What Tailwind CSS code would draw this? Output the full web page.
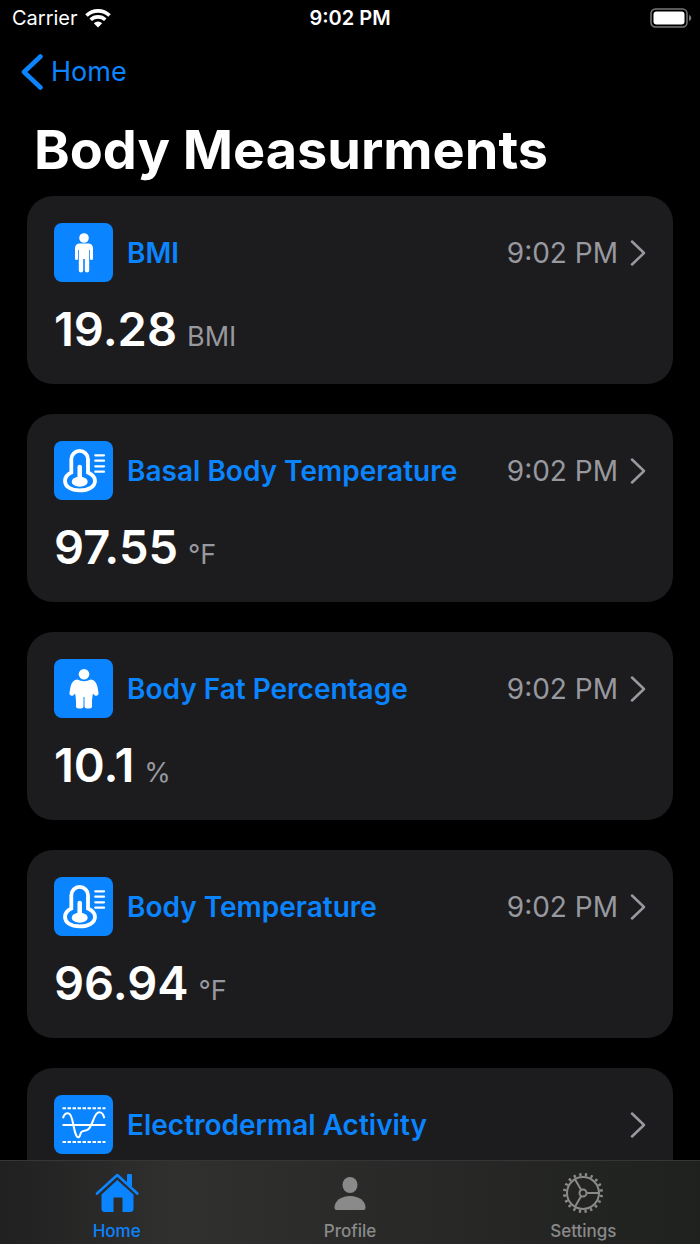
<!DOCTYPE html>
<html lang="en">
  <head>
    <meta charset="UTF-8" />
    <meta name="viewport" content="width=device-width, initial-scale=1.0" />
    <script src="https://cdn.jsdelivr.net/npm/@tailwindcss/browser@4"></script>
    <title>Body Measurments</title>
  </head>

  <body class="bg-black font-['Inter','Liberation_Sans',sans-serif] text-white">
    <!-- shared icons -->
    <svg class="hidden">
      <symbol id="thermometer" viewBox="0 0 59 59">
        <path
          d="M17.300 18.300a8.350 8.350 0 0 1 16.700 0V31.500c4.500 2 7 5 7 8.500 0 5.500-6.500 9.400-15.300 9.400S11 45.500 11 40c0-3.500 2-6.500 6.300-8.500z"
          fill="none"
          stroke="#fff"
          stroke-width="3.800"
        />
        <path d="M25.700 26v14" stroke="#fff" stroke-width="4.500" stroke-linecap="round" />
        <ellipse cx="25.700" cy="40.800" rx="8" ry="5" fill="#fff" />
        <path d="M41.300 14.300h8.700M41.300 19.700h8.700M41.300 25.300h8.700M41.300 30.700h8.700" stroke="#fff" stroke-width="2.300" stroke-linecap="round" />
      </symbol>
      <symbol id="chevron" viewBox="0 0 16 26">
        <path d="M2 1.500 14 13 2 24.500" fill="none" stroke="currentColor" stroke-width="2.500" stroke-linecap="round" stroke-linejoin="round" />
      </symbol>
    </svg>

    <div class="flex h-screen flex-col">
      <!-- status bar -->
      <div class="grid h-9 grid-cols-3 items-center px-2 text-xl leading-6">
        <div class="flex items-center gap-1.5 pl-1">
          <span>Carrier</span>
          <svg class="h-5 w-7" viewBox="0 0 28 20" aria-hidden="true">
            <g fill="none" stroke="#fff" stroke-width="3.600">
              <path d="M2.500 7.500a16.500 16.500 0 0 1 23 0" />
              <path d="M6.700 11.800a10.500 10.500 0 0 1 14.600 0" />
            </g>
            <path d="M14 19.500 9.800 15.300a6 6 0 0 1 8.400 0z" fill="#fff" />
          </svg>
        </div>
        <span class="text-center font-semibold">9:02 PM</span>
        <svg class="h-5 w-[42px] justify-self-end" viewBox="0 0 42 20" aria-hidden="true">
          <rect x="1" y="1" width="36" height="18" rx="4.500" fill="none" stroke="#77777b" stroke-width="1.500" />
          <rect x="3.500" y="3.500" width="31" height="13" rx="3" fill="#fff" />
          <path d="M39 7c3 1 3 5 0 6z" fill="#77777b" />
        </svg>
      </div>

      <header>
        <a href="#" class="flex h-[72px] w-fit items-center gap-2 pl-[21px] text-[27px] text-[#0a84ff]">
          <svg class="h-9 w-[22px]" viewBox="0 0 22 36" aria-hidden="true">
            <path d="M19.500 2.500 3 18l16.500 15.500" fill="none" stroke="currentColor" stroke-width="4.500" stroke-linecap="round" stroke-linejoin="round" />
          </svg>
          Home
        </a>
        <h1 class="pl-[34px] text-[54px] leading-[84px] font-bold">Body Measurments</h1>
      </header>

      <main class="min-h-0 flex-1 overflow-y-auto px-[27px] pt-1 [scrollbar-width:none]">
        <ul class="flex flex-col gap-[30px]">
          <li>
            <a href="#" class="block h-[188px] rounded-[26px] bg-[#1c1c1e] p-[27px]">
              <div class="flex items-center">
                <svg class="size-[59px] rounded-lg bg-[#0a84ff]" viewBox="0 0 59 59" fill="#fff" aria-hidden="true">
                  <circle cx="30" cy="15" r="4.800" />
                  <path d="M25.500 20.500h9a4.500 4.500 0 0 1 4.500 4.500v10.500a1.500 1.500 0 0 1-3 0V27h-.8v20.300a2.200 2.200 0 0 1-4.400 0V36h-1.600v11.300a2.200 2.200 0 0 1-4.400 0V27H24v8.500a1.500 1.500 0 0 1-3 0V25a4.500 4.500 0 0 1 4.500-4.500z" />
                </svg>
                <h2 class="ml-3.5 flex-1 text-[28px] font-semibold text-[#0a84ff]">BMI</h2>
                <span class="text-[28px] text-[#98989f]">9:02 PM</span>
                <svg class="ml-3 h-[26px] w-4 text-[#98989f]"><use href="#chevron" /></svg>
              </div>
              <p class="mt-[15px] flex items-baseline gap-2.5 text-[47px] leading-[64px] font-semibold">
                19.28 <span class="text-[27px] font-normal text-[#98989f]">BMI</span>
              </p>
            </a>
          </li>
          <li>
            <a href="#" class="block h-[188px] rounded-[26px] bg-[#1c1c1e] p-[27px]">
              <div class="flex items-center">
                <svg class="size-[59px] rounded-lg bg-[#0a84ff]"><use href="#thermometer" /></svg>
                <h2 class="ml-3.5 flex-1 text-[28px] font-semibold text-[#0a84ff]">Basal Body Temperature</h2>
                <span class="text-[28px] text-[#98989f]">9:02 PM</span>
                <svg class="ml-3 h-[26px] w-4 text-[#98989f]"><use href="#chevron" /></svg>
              </div>
              <p class="mt-[15px] flex items-baseline gap-2.5 text-[47px] leading-[64px] font-semibold">
                97.55 <span class="text-[27px] font-normal text-[#98989f]">°F</span>
              </p>
            </a>
          </li>
          <li>
            <a href="#" class="block h-[188px] rounded-[26px] bg-[#1c1c1e] p-[27px]">
              <div class="flex items-center">
                <svg class="size-[59px] rounded-lg bg-[#0a84ff]" viewBox="0 0 59 59" fill="#fff" aria-hidden="true">
                  <circle cx="30" cy="15.300" r="5.300" />
                  <path d="M23.500 20.500c4 2.300 9 2.300 13 0 4.500.5 6 3.500 7 7.500l1 5.500c.6 3.500-3.700 4.500-5 1.500h-.7c-.5 3.500-.8 6-.8 9v3a2.500 2.500 0 0 1-2.500 2.500h-2.500a2.500 2.500 0 0 1-2.500-2.500V38h-1v9a2.500 2.500 0 0 1-2.500 2.500h-2.500a2.500 2.500 0 0 1-2.500-2.500v-3c0-3-.3-5.500-.8-9h-.7c-1.300 3-5.600 2-5-1.500l1-5.500c1-4 2.500-7 7-7.500z" />
                </svg>
                <h2 class="ml-3.5 flex-1 text-[28px] font-semibold text-[#0a84ff]">Body Fat Percentage</h2>
                <span class="text-[28px] text-[#98989f]">9:02 PM</span>
                <svg class="ml-3 h-[26px] w-4 text-[#98989f]"><use href="#chevron" /></svg>
              </div>
              <p class="mt-[15px] flex items-baseline gap-2.5 text-[47px] leading-[64px] font-semibold">
                10.1 <span class="text-[27px] font-normal text-[#98989f]">%</span>
              </p>
            </a>
          </li>
          <li>
            <a href="#" class="block h-[188px] rounded-[26px] bg-[#1c1c1e] p-[27px]">
              <div class="flex items-center">
                <svg class="size-[59px] rounded-lg bg-[#0a84ff]"><use href="#thermometer" /></svg>
                <h2 class="ml-3.5 flex-1 text-[28px] font-semibold text-[#0a84ff]">Body Temperature</h2>
                <span class="text-[28px] text-[#98989f]">9:02 PM</span>
                <svg class="ml-3 h-[26px] w-4 text-[#98989f]"><use href="#chevron" /></svg>
              </div>
              <p class="mt-[15px] flex items-baseline gap-2.5 text-[47px] leading-[64px] font-semibold">
                96.94 <span class="text-[27px] font-normal text-[#98989f]">°F</span>
              </p>
            </a>
          </li>
          <li>
            <a href="#" class="block h-[188px] rounded-[26px] bg-[#1c1c1e] p-[27px]">
              <div class="flex items-center">
                <svg class="size-[59px] rounded-lg bg-[#0a84ff]" viewBox="0 0 59 59" fill="none" stroke="#fff" aria-hidden="true">
                  <path d="M8.500 13.300h43M8.500 47h43" stroke-width="2" stroke-dasharray="3.500 1.500" />
                  <path d="M8.500 30h43" stroke-width="1.800" />
                  <path d="M9 23.300c.7-3 2.500-5 4.700-5 2.300 0 3.600 2.700 4.600 6.700 1.700 7 3 17.300 6 17.300 2 0 1.700-4.300 3.400-5.600 2-1.400 4.600-.5 6.600-2.400 2.200-2 3.500-5.800 5-9.300 1.500-4 3.400-7.700 6-7.700 2.500 0 4.300 2.500 5 6" stroke-width="2" />
                </svg>
                <h2 class="ml-3.5 flex-1 text-[28px] font-semibold text-[#0a84ff]">Electrodermal Activity</h2>
                <svg class="ml-3 h-[26px] w-4 text-[#98989f]"><use href="#chevron" /></svg>
              </div>
            </a>
          </li>
        </ul>
      </main>

      <!-- tab bar -->
      <nav class="grid h-[84px] grid-cols-3 border-t border-[#363638] bg-linear-to-r from-[#202020] via-[#30302f] via-25% to-[#1f211f] text-[17px] leading-5 font-medium text-[#8a8a8a]">
        <a href="#" class="flex flex-col items-center gap-1 pt-3 text-[#0a84ff]">
          <svg class="size-11" viewBox="0 0 44 44" fill="currentColor" aria-hidden="true">
            <path d="M2 20.500 22.300 2l20 18.500" fill="none" stroke="currentColor" stroke-width="2.600" stroke-linecap="round" stroke-linejoin="round" />
            <path d="M32 2a1 1 0 0 1 1-1h3a1 1 0 0 1 1 1v13l-5-4.500z" />
            <path d="M22.300 7 38.500 21.500v14A3.500 3.500 0 0 1 35 39h-7.500V24.500h-9V39H10a3.500 3.500 0 0 1-3.500-3.500v-14z" />
          </svg>
          Home
        </a>
        <a href="#" class="flex flex-col items-center gap-1 pt-3">
          <svg class="size-11" viewBox="0 0 44 44" fill="currentColor" aria-hidden="true">
            <ellipse cx="22" cy="12" rx="7.500" ry="8" />
            <path d="M6.500 34.500C6.500 28 13 23 22 23s15.500 5 15.500 11.500c0 1.500-.5 2.500-2 2.500h-27c-1.500 0-2-1-2-2.500z" />
          </svg>
          Profile
        </a>
        <a href="#" class="flex flex-col items-center gap-1 pt-3">
          <svg class="size-11" viewBox="0 0 44 44" fill="none" stroke="currentColor" stroke-width="2" aria-hidden="true">
            <circle cx="22" cy="20" r="16" />
            <circle cx="22" cy="20" r="18.500" stroke-width="3" pathLength="60" stroke-dasharray="1.200 1.800" stroke-dashoffset="-1" />
            <circle cx="22" cy="20" r="3.500" />
            <path d="M25.500 20h13M20.200 17 13.700 5.700M20.200 23l-6.500 11.300" />
          </svg>
          Settings
        </a>
      </nav>
    </div>
  </body>
</html>
